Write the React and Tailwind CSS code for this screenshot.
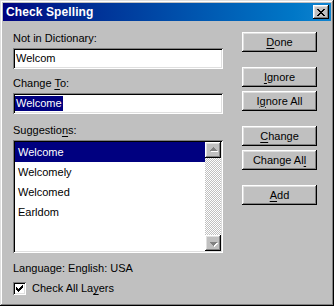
const raised =
  'shadow-[inset_-1px_-1px_0_#000,inset_1px_1px_0_#fff,inset_-2px_-2px_0_#808080,inset_2px_2px_0_#dfdfdf]';
const sunken =
  'shadow-[inset_1px_1px_0_#808080,inset_-1px_-1px_0_#fff,inset_2px_2px_0_#000,inset_-2px_-2px_0_#dfdfdf]';

function U({ children }) {
  return <span className="underline underline-offset-[2px] decoration-1">{children}</span>;
}

function Button({ children, className = '' }) {
  return (
    <button className={`flex h-[20px] w-[75px] items-center justify-center bg-[#c0c0c0] leading-none ${raised} ${className}`}>
      <span>{children}</span>
    </button>
  );
}

function Arrow({ up }) {
  return (
    <div className={`grid h-[16px] w-[16px] place-items-center bg-[#c0c0c0] ${raised}`}>
      <svg width="16" height="16" viewBox="0 0 16 16" shapeRendering="crispEdges">
        {up ? (
          <>
            <path d="M6 9h7v1H6zM7 8h5v1H7zM8 7h3v1H8z" fill="#fff" />
            <path d="M5 8h7v1H5zM6 7h5v1H6zM7 6h3v1H7zM8 5h1v1H8z" fill="#808080" />
          </>
        ) : (
          <>
            <path d="M6 8h7v1H6zM7 9h5v1H7zM8 10h3v1H8zM9 11h1v1H9z" fill="#fff" />
            <path d="M5 7h7v1H5zM6 8h5v1H6zM7 9h3v1H7zM8 10h1v1H8z" fill="#808080" />
          </>
        )}
      </svg>
    </div>
  );
}

const suggestions = ['Welcome', 'Welcomely', 'Welcomed', 'Earldom'];

export default function App() {
  return (
    <div
      className={`flex h-[306px] w-[334px] flex-col bg-[#c0c0c0] p-[3px] font-['Liberation_Sans',Arial,sans-serif] text-[11px] text-black shadow-[inset_-1px_-1px_0_#000,inset_1px_1px_0_#dfdfdf,inset_-2px_-2px_0_#808080,inset_2px_2px_0_#fff]`}
    >
      <div className="flex h-[18px] items-center justify-between bg-gradient-to-r from-[#000080] to-[#1084d0] pl-[3px] pr-[2px]">
        <span className="text-[12px] font-bold leading-none tracking-[0.1px] text-white">Check Spelling</span>
        <button className={`grid h-[14px] w-[16px] place-items-center bg-[#c0c0c0] ${raised}`}>
          <svg width="8" height="7" viewBox="0 0 8 7" shapeRendering="crispEdges">
            <path d="M0 0h2v1H0zM6 0h2v1H6zM1 1h2v1H1zM5 1h2v1H5zM2 2h4v1H2zM3 3h2v1H3zM2 4h4v1H2zM1 5h2v1H1zM5 5h2v1H5zM0 6h2v1H0zM6 6h2v1H6z" fill="#000" />
          </svg>
        </button>
      </div>

      <div className="flex flex-1 pl-[10px]">
        <div className="flex w-[210px] flex-col pt-[10px]">
          <div className="h-[14px] leading-[14px]">Not in Dictionary:</div>
          <div className={`mt-[3px] flex h-[21px] items-center bg-white pl-[3px] ${sunken}`}>Welcom</div>

          <div className="mt-[7px] h-[14px] leading-[14px]">
            Change <U>T</U>o:
          </div>
          <div className={`mt-[3px] flex h-[21px] items-center bg-white pl-[2px] ${sunken}`}>
            <span className="bg-[#000080] px-px leading-[15px] text-white">Welcome</span>
          </div>

          <div className="mt-[9px] h-[14px] leading-[14px]">
            Suggestio<U>n</U>s:
          </div>
          <div className={`mt-[3px] flex h-[113px] bg-white p-[2px] ${sunken}`}>
            <div className="flex flex-1 flex-col">
              {suggestions.map((s, i) => (
                <div
                  key={s}
                  className={`flex h-[20px] items-center pl-[3px] ${i === 0 ? 'bg-[#000080] text-white' : ''}`}
                >
                  {s}
                </div>
              ))}
            </div>
            <div className="flex w-[16px] flex-col">
              <Arrow up />
              <div className="flex-1 bg-[image:repeating-conic-gradient(#fff_0%_25%,#c0c0c0_0%_50%)] bg-[length:2px_2px]" />
              <Arrow />
            </div>
          </div>

          <div className="mt-[8px] h-[14px] leading-[14px]">Language: English: USA</div>
          <div className="mt-[7px] flex items-center gap-[6px]">
            <div className={`grid h-[13px] w-[13px] place-items-center bg-white ${sunken}`}>
              <svg width="7" height="7" viewBox="0 0 7 7" shapeRendering="crispEdges">
                <path d="M6 0h1v3H6zM5 1h1v3H5zM4 2h1v3H4zM3 3h1v3H3zM2 4h1v3H2zM1 3h1v3H1zM0 2h1v3H0z" fill="#000" />
              </svg>
            </div>
            <span className="leading-[13px]">
              Check All La<U>y</U>ers
            </span>
          </div>
        </div>

        <div className="ml-[19px] flex flex-col pt-[11px]">
          <Button>
            <U>D</U>one
          </Button>
          <Button className="mt-[15px]">
            <U>I</U>gnore
          </Button>
          <Button className="mt-[4px]">
            I<U>g</U>nore All
          </Button>
          <Button className="mt-[15px]">
            <U>C</U>hange
          </Button>
          <Button className="mt-[4px]">
            Change Al<U>l</U>
          </Button>
          <Button className="mt-[15px]">
            <U>A</U>dd
          </Button>
        </div>
      </div>
    </div>
  );
}
